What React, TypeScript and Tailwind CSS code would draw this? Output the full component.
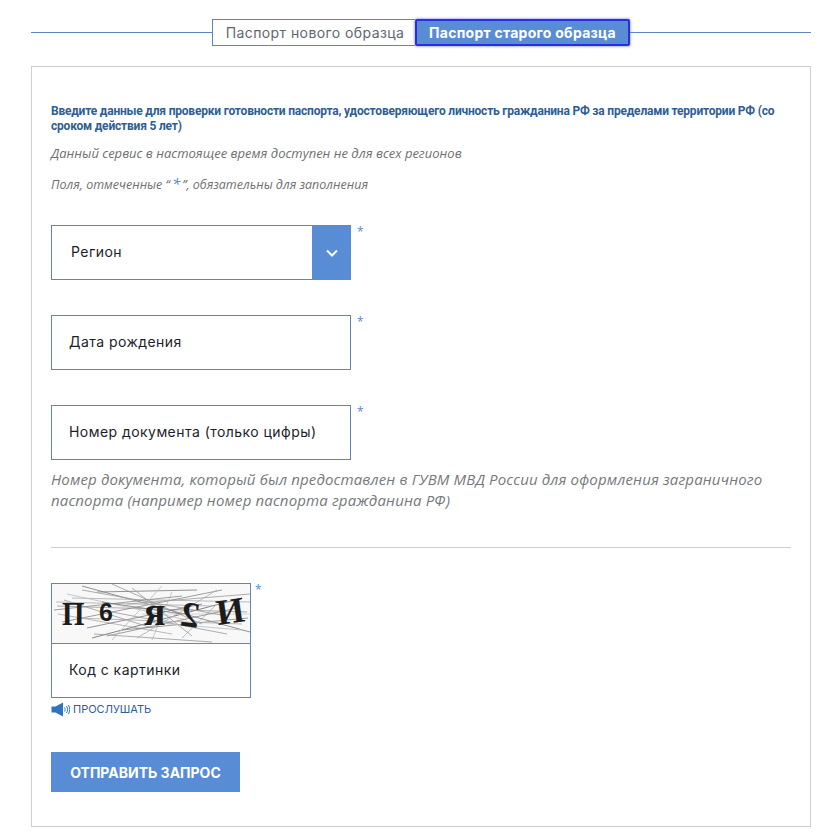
import React from "react";

const sans = "font-['Inter','Noto_Sans',sans-serif]";

function Star({ className = "" }: { className?: string }) {
  return <span className={`text-[12px] leading-none text-[#5a8ac0] font-['Open_Sans'] ${className}`}>*</span>;
}

function Field({ label }: { label: string }) {
  return (
    <div className="flex items-start">
      <div className="flex w-[300px] h-[55px] items-center border border-[#5b87bd] bg-white pl-[17px] pb-[2px] text-[14px] text-[#1d1d2b] tracking-[0.45px]">
        {label}
      </div>
      <Star className="ml-[6px] mt-[1px]" />
    </div>
  );
}

function Captcha() {
  const lines: [number, number, number, number, string][] = [
    [30, 2, 198, 48, "#777"], [5, 22, 195, 28, "#999"], [10, 38, 170, 6, "#888"], [40, 54, 190, 14, "#666"],
    [20, 14, 198, 18, "#aaa"], [60, 0, 150, 40, "#999"], [100, 56, 120, 8, "#bbb"], [45, 8, 145, 6, "#777"],
    [6, 30, 120, 50, "#aaa"], [70, 46, 196, 34, "#888"], [130, 54, 165, 20, "#aaa"], [15, 10, 135, 36, "#bbb"],
    [80, 4, 140, 52, "#999"], [90, 30, 198, 30, "#ccc"], [60, 28, 175, 50, "#999"], [35, 44, 150, 20, "#777"],
    [4, 18, 160, 22, "#aaa"], [30, 6, 175, 32, "#999"], [2, 26, 130, 12, "#888"], [55, 52, 185, 24, "#888"],
    [110, 2, 60, 56, "#bbb"], [25, 34, 190, 40, "#aaa"], [75, 20, 198, 10, "#999"], [12, 16, 100, 44, "#999"],
    [165, 6, 85, 54, "#aaa"], [42, 50, 160, 58, "#999"], [50, 18, 130, 30, "#777"], [95, 38, 190, 46, "#bbb"],
  ];
  return (
    <svg width="198" height="59" viewBox="0 0 198 59" className="block">
      <rect width="198" height="59" fill="#f8f8f8" />
      {lines.map(([a, b, c, d, s], i) => (
        <line key={i} x1={a} y1={b} x2={c} y2={d} stroke={s} strokeWidth="0.8" />
      ))}
      <g fontFamily="'Liberation Serif','DejaVu Serif',serif" fontWeight="700" fill="#1c1c1c">
        <text transform="translate(10 41) scale(0.85 1)" fontSize="34">П</text>
        <text x="47" y="37" fontSize="25" fontFamily="'Liberation Sans',sans-serif">6</text>
        <text transform="translate(92 41) scale(0.95 1)" fontSize="42">я</text>
        <text transform="translate(146 44) rotate(8) scale(-1.05 1)" fontSize="36">2</text>
        <text transform="translate(166 41) rotate(-8)" fontSize="36">И</text>
      </g>
    </svg>
  );
}

export default function App() {
  return (
    <div className={`w-[835px] h-[838px] bg-white pt-[19px] ${sans}`}>
      <div className="ml-[31px] w-[780px]">
        <div className="flex items-center h-[27px]">
          <div className="h-px flex-1 bg-[#5b87bd]" />
          <div className="h-[27px] w-[203px] flex items-center justify-center border border-r-0 border-[#5b87bd] pl-[2px] text-[14px] text-[#5f6670] tracking-[0.42px]">
            Паспорт нового образца
          </div>
          <div className="h-[27px] w-[215px] flex items-center justify-center border-2 border-[#2a2ee0] rounded-[2px] bg-[#588dd5] text-[14px] font-bold text-white tracking-[0.27px] shadow-[0_0_3px_#5a6cf0]">
            Паспорт старого образца
          </div>
          <div className="h-px flex-1 bg-[#5b87bd]" />
        </div>

        <div className="mt-[20px] h-[761px] border border-[#cfcfcf] px-[19px] pt-[37px]">
          <p className="font-['Roboto'] text-[12px] font-bold leading-[15px] text-[#2f5d94] tracking-[-0.2px]">
            Введите данные для проверки готовности паспорта, удостоверяющего личность гражданина РФ за пределами территории РФ (со сроком действия 5 лет)
          </p>
          <p className="mt-[11px] font-['Open_Sans'] italic text-[13px] leading-[17px] text-[#707070]">
            Данный сервис в настоящее время доступен не для всех регионов
          </p>
          <p className="mt-[14px] flex items-baseline font-['Open_Sans'] italic text-[12.5px] leading-[17px] text-[#707070]">
            Поля, отмеченные “<span className="mx-[2px] text-[15px] leading-none text-[#4f86c6]">*</span>”, обязательны для заполнения
          </p>

          <div className="mt-[32px] flex items-start">
            <div className="flex w-[300px] h-[55px] items-stretch border border-[#5b87bd]">
              <div className="flex-1 flex items-center pl-[19px] pb-[2px] text-[14px] text-[#1d1d2b] tracking-[0.45px]">Регион</div>
              <div className="w-[39px] -m-px ml-0 flex items-center justify-center bg-[#588dd5]">
                <svg width="12" height="8" viewBox="0 0 12 8" fill="none">
                  <path d="M1 1.5l5 5 5-5" stroke="#fff" strokeWidth="2" />
                </svg>
              </div>
            </div>
            <Star className="ml-[6px] mt-[1px]" />
          </div>

          <div className="mt-[35px]"><Field label="Дата рождения" /></div>
          <div className="mt-[35px]"><Field label="Номер документа (только цифры)" /></div>

          <p className="mt-[9px] font-['Open_Sans'] italic text-[15px] leading-[21px] tracking-[0.14px] text-[#76797c]">
            Номер документа, который был предоставлен в ГУВМ МВД России для оформления заграничного паспорта (например номер паспорта гражданина РФ)
          </p>

          <div className="mt-[36px] h-px bg-[#cfcfcf]" />

          <div className="mt-[35px] flex items-start">
            <div className="w-[200px] border border-[#5b87bd]">
              <Captcha />
              <div className="h-[54px] border-t border-[#5b87bd] flex items-center pl-[17px] pb-[2px] text-[14px] text-[#1d1d2b] tracking-[0.45px]">
                Код с картинки
              </div>
            </div>
            <Star className="ml-[4px] mt-[1px]" />
          </div>

          <div className="mt-[4px] flex items-center gap-[3px] h-[14px]">
            <svg width="19" height="15" viewBox="0 0 19 15" fill="none">
              <path d="M0.5 4.5h4L12 0.5v14L4.5 10.5H0.5z" fill="#2f73c0" />
              <path d="M13.5 5.5c.8 1.2.8 2.8 0 4M15.5 4c1.4 2.2 1.4 4.8 0 7M17.5 3c1.6 2.8 1.6 6.2 0 9" stroke="#2f73c0" strokeWidth="1" />
            </svg>
            <span className="text-[11px] text-[#2f5d94]">ПРОСЛУШАТЬ</span>
          </div>

          <button className="mt-[36px] flex h-[40px] w-[189px] items-center justify-center bg-[#588dd5] text-[14px] font-bold text-white">
            ОТПРАВИТЬ ЗАПРОС
          </button>
        </div>
      </div>
    </div>
  );
}
